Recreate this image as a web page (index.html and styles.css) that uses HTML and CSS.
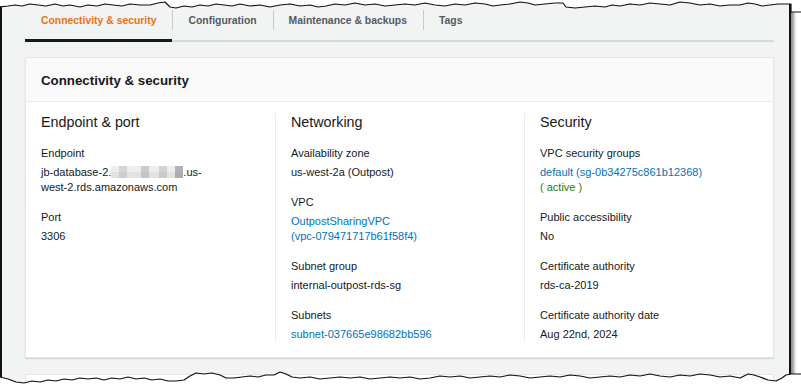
FILE: index.html
```html
<!DOCTYPE html>
<html lang="en">
<head>
<meta charset="utf-8">
<title>Connectivity &amp; security</title>
<link rel="stylesheet" href="styles.css">
</head>
<body>
<div class="frame">
  <nav class="tabs">
    <div class="tab active">Connectivity &amp; security</div>
    <div class="tab">Configuration</div>
    <div class="tab">Maintenance &amp; backups</div>
    <div class="tab">Tags</div>
  </nav>

  <section class="card">
    <header class="card-header">Connectivity &amp; security</header>
    <div class="card-body">
      <div class="col">
        <h3 class="col-title">Endpoint &amp; port</h3>
        <div class="kv">
          <div class="key">Endpoint</div>
          <div class="val">jb-database-2.<span class="redacted"></span>.us-<br>west-2.rds.amazonaws.com</div>
        </div>
        <div class="kv">
          <div class="key">Port</div>
          <div class="val">3306</div>
        </div>
      </div>
      <div class="col">
        <h3 class="col-title">Networking</h3>
        <div class="kv">
          <div class="key">Availability zone</div>
          <div class="val">us-west-2a (Outpost)</div>
        </div>
        <div class="kv">
          <div class="key">VPC</div>
          <div class="val"><a class="link">OutpostSharingVPC<br>(vpc-079471717b61f58f4)</a></div>
        </div>
        <div class="kv">
          <div class="key">Subnet group</div>
          <div class="val">internal-outpost-rds-sg</div>
        </div>
        <div class="kv">
          <div class="key">Subnets</div>
          <div class="val"><a class="link">subnet-037665e98682bb596</a></div>
        </div>
      </div>
      <div class="col">
        <h3 class="col-title">Security</h3>
        <div class="kv">
          <div class="key">VPC security groups</div>
          <div class="val"><a class="link">default (sg-0b34275c861b12368)</a><br><span class="ok">( active )</span></div>
        </div>
        <div class="kv">
          <div class="key">Public accessibility</div>
          <div class="val">No</div>
        </div>
        <div class="kv">
          <div class="key">Certificate authority</div>
          <div class="val">rds-ca-2019</div>
        </div>
        <div class="kv">
          <div class="key">Certificate authority date</div>
          <div class="val">Aug 22nd, 2024</div>
        </div>
      </div>
    </div>
  </section>

  <section class="card next-card"></section>
</div>

<svg class="torn" width="801" height="392" viewBox="0 0 801 392" aria-hidden="true">
  <defs>
    <filter id="blur" x="-5%" y="-50%" width="110%" height="200%"><feGaussianBlur stdDeviation="1.6"/></filter>
  </defs>
  <path fill="#fff" stroke="#111" stroke-width="1.2" stroke-linejoin="round"
    d="M-2,-2 L-2,7 L8,6 L15,5 L22,6 L30,4 L38,5 L46,6 L55,4 L63,6 L70,5 L80,7 L88,5 L97,6 L105,4 L113,5 L122,6 L130,4 L140,5 L150,5 L158,3 L165,2 L170,7 L176,8 L184,6 L192,7 L200,5 L208,6 L216,4 L224,5 L232,6 L240,4 L250,6 L260,5 L270,7 L280,5 L290,4 L300,6 L310,5 L318,7 L326,6 L335,4 L345,5 L355,3 L365,5 L375,4 L385,6 L395,5 L405,4 L415,5 L425,3 L435,5 L445,6 L455,4 L465,5 L475,3 L485,4 L493,6 L500,5 L510,4 L520,2 L528,3 L535,5 L545,4 L555,3 L563,3 L566,7 L575,8 L585,7 L595,6 L605,7 L612,5 L620,6 L630,4 L640,5 L650,3 L660,4 L670,5 L680,2 L690,3 L700,5 L710,4 L720,6 L730,5 L740,5 L748,3 L755,4 L762,6 L770,5 L778,4 L785,4 L791,4 L791,12 L803,12 L803,-2 Z"/>
  <path fill="none" stroke="#000" stroke-opacity="0.45" stroke-width="3" filter="url(#blur)"
    d="M2,381 L10,383 L18,386 L26,387 L34,385 L42,386 L50,384 L58,385 L66,383 L74,384 L82,382 L90,383 L98,382 L106,384 L114,382 L122,383 L130,381 L138,383 L146,382 L154,384 L162,383 L170,385 L178,385 L186,384 L192,380 L198,377 L206,378 L214,377 L222,379 L228,382 L236,382 L244,381 L252,380 L260,381 L268,379 L276,379 L282,376 L288,378 L294,381 L302,382 L312,381 L322,383 L332,382 L342,381 L352,382 L362,381 L372,383 L382,382 L392,381 L402,382 L412,381 L422,383 L432,382 L442,380 L452,381 L462,380 L472,382 L482,381 L492,380 L502,381 L512,379 L522,380 L532,382 L542,381 L552,380 L562,381 L572,379 L582,380 L592,382 L602,381 L612,380 L622,381 L632,379 L642,380 L652,378 L662,380 L672,381 L682,379 L692,380 L702,378 L712,379 L722,381 L732,380 L742,382 L750,378 L756,379 L762,381 L770,384 L778,385 L784,382 L788,379 L793,378"/>
  <path fill="#fff" stroke="#111" stroke-width="1.2" stroke-linejoin="round"
    d="M-2,377 L0,377 L8,379 L16,382 L24,383 L32,381 L40,382 L48,380 L56,381 L64,379 L72,380 L80,378 L88,379 L96,378 L104,380 L112,378 L120,379 L128,377 L136,379 L144,378 L152,380 L160,379 L168,381 L176,381 L184,380 L190,376 L196,373 L204,374 L212,373 L220,375 L226,378 L234,378 L242,377 L250,376 L258,377 L266,375 L274,375 L280,372 L286,374 L292,377 L300,378 L310,377 L320,379 L330,378 L340,377 L350,378 L360,377 L370,379 L380,378 L390,377 L400,378 L410,377 L420,379 L430,378 L440,376 L450,377 L460,376 L470,378 L480,377 L490,376 L500,377 L510,375 L520,376 L530,378 L540,377 L550,376 L560,377 L570,375 L580,376 L590,378 L600,377 L610,376 L620,377 L630,375 L640,376 L650,374 L660,376 L670,377 L680,375 L690,376 L700,374 L710,375 L720,377 L730,376 L740,378 L748,374 L754,375 L760,377 L768,380 L776,381 L782,378 L786,375 L791,374 L803,374 L803,394 L-2,394 Z"/>
</svg>
</body>
</html>
```

FILE: styles.css
```css
* { box-sizing: border-box; }

html, body {
  margin: 0;
  padding: 0;
  background: #ffffff;
  width: 801px;
  height: 392px;
  overflow: hidden;
}

body {
  position: relative;
  font-family: "Liberation Sans", Arial, sans-serif;
  color: #16191f;
}

.frame {
  width: 791px;
  height: 392px;
  background: #f2f3f3;
  border-left: 2px solid #111;
  border-right: 2px solid #111;
  box-shadow: 3px 2px 3px rgba(0, 0, 0, 0.45);
  overflow: hidden;
  padding: 0 15px 0 23px;
}

/* Tabs */
.tabs {
  display: flex;
  border-bottom: 2px solid #d5dbdb;
  height: 42px;
}

.tab {
  position: relative;
  padding: 13px 16px 0 16px;
  font-size: 10.4px;
  line-height: 16px;
  font-weight: 700;
  color: #545b64;
  white-space: nowrap;
}

.tab + .tab::before {
  content: "";
  position: absolute;
  left: 0;
  top: 10px;
  height: 20px;
  border-left: 1px solid #c3cbcc;
}

.tab.active {
  color: #ec7211;
}

.tab.active::after {
  content: "";
  position: absolute;
  left: 0;
  right: 0;
  bottom: -2px;
  height: 3px;
  background: #16191f;
}

/* Card */
.card {
  margin-top: 15px;
  background: #ffffff;
  border: 1px solid #e4e7e7;
  box-shadow: 0 1px 1px rgba(0, 28, 36, 0.12);
}

.card-header {
  background: #fafafa;
  border-bottom: 1px solid #eaeded;
  padding: 13px 15px 10px 15px;
  font-size: 13.3px;
  line-height: 20px;
  font-weight: 700;
}

.card-body {
  display: grid;
  grid-template-columns: 234px 249px 1fr;
  padding: 11px 15px 15px 15px;
}

.col + .col {
  border-left: 1px solid #eaeded;
  padding-left: 15px;
}

.col-title {
  margin: 0 0 14px 0;
  font-size: 14.3px;
  line-height: 18px;
  font-weight: 400;
}

.kv + .kv {
  margin-top: 14px;
}

.key {
  font-size: 11px;
  line-height: 16px;
  margin-bottom: 4px;
}

.val {
  font-size: 11px;
  line-height: 15px;
}

.link {
  color: #0073bb;
  text-decoration: none;
}

.ok {
  color: #1d8102;
}

.redacted {
  display: inline-block;
  vertical-align: -2px;
  width: 72px;
  height: 12px;
  background:
    linear-gradient(90deg, transparent 0 8px, rgba(170,170,170,0.35) 8px 16px, transparent 16px 30px, rgba(150,150,150,0.4) 30px 38px, transparent 38px 48px, rgba(160,160,160,0.35) 48px 56px, transparent 56px 64px, rgba(120,120,120,0.5) 64px 72px),
    linear-gradient(180deg, #eeeeee 0 6px, #e2e2e2 6px 12px);
}

.next-card {
  margin-top: 16px;
  height: 40px;
  box-shadow: none;
}

/* Torn-paper edge overlay */
.torn {
  position: absolute;
  left: 0;
  top: 0;
  pointer-events: none;
}
```
